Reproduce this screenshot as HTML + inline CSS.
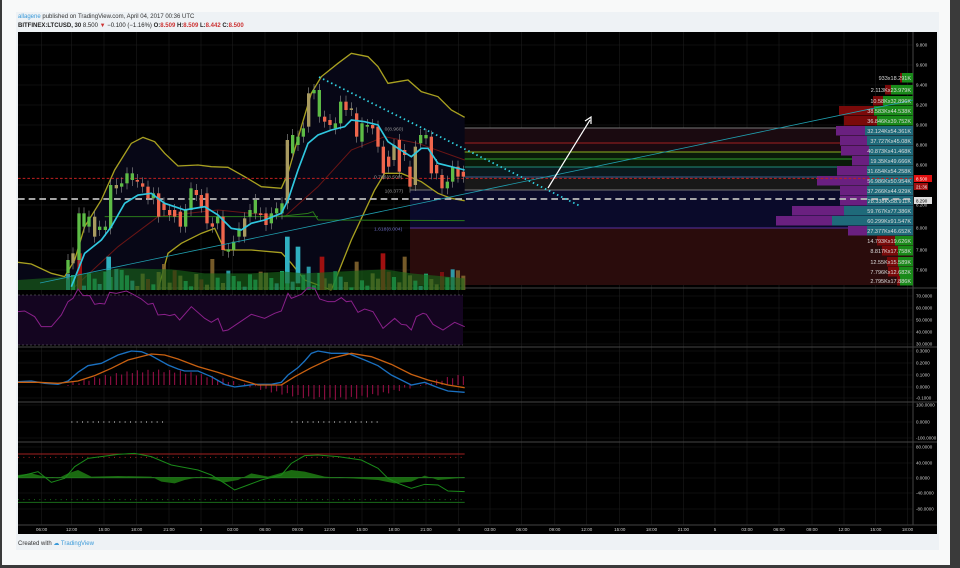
<!DOCTYPE html>
<html><head><meta charset="utf-8"><style>
*{margin:0;padding:0;box-sizing:border-box}
body{width:960px;height:568px;background:#3a3a3a;font-family:"Liberation Sans",sans-serif;position:relative;overflow:hidden}
#card{position:absolute;left:2px;top:0;width:948px;height:565px;background:#f8f9f9}
#inner{position:absolute;left:16px;top:12px;width:923px;height:538px;background:#eef2f5}
.h1{position:absolute;left:18px;top:14px;font-size:6px;color:#333}
.h2{position:absolute;left:18px;top:23px;font-size:6px;color:#222;font-weight:bold}
.r{color:#c33}
#foot{position:absolute;left:18px;top:540px;font-size:6px;color:#333}
svg{position:absolute;left:0;top:0}
</style></head><body>
<div id="card"></div><div id="inner"></div>
<div class="h1"><span style="color:#3a9ad9">allagene</span> published on TradingView.com, April 04, 2017 00:36 UTC</div>
<div class="h2">BITFINEX:LTCUSD, 30 <span style="font-weight:normal">8.500 <span class="r">▼</span> −0.100 (−1.16%)</span> O:<span class="r">8.509</span> H:<span class="r">8.509</span> L:<span class="r">8.442</span> C:<span class="r">8.500</span></div>
<div id="foot">Created with <span style="color:#3a9ad9">☁ TradingView</span></div>
<svg width="960" height="568" id="s" font-family="Liberation Sans" font-size="5">
<rect x="18" y="32" width="919" height="502" fill="#000"/>
<g id="grid" stroke="#1c1c1c" stroke-width="0.6"></g>
<g stroke="#444" stroke-width="1">
<line x1="18" y1="288" x2="937" y2="288"/><line x1="18" y1="347" x2="937" y2="347"/>
<line x1="18" y1="402" x2="937" y2="402"/><line x1="18" y1="442" x2="937" y2="442"/>
<line x1="18" y1="525" x2="937" y2="525"/><line x1="913" y1="32" x2="913" y2="525"/>
</g>
<rect x="410" y="128" width="503" height="100" fill="#1a0a10"/>
<rect x="410" y="152" width="503" height="15" fill="#0a1a0a"/>
<rect x="410" y="167" width="503" height="10" fill="#0a1a1f"/>
<rect x="410" y="177" width="503" height="13" fill="#181818"/>
<rect x="410" y="190" width="503" height="38" fill="#0a0a2a"/>
<rect x="410" y="228" width="503" height="57" fill="#2a0c0c"/>
<g stroke-width="1">
<line x1="410" y1="128" x2="913" y2="128" stroke="#777"/>
<line x1="410" y1="143" x2="913" y2="143" stroke="#a02020"/>
<line x1="410" y1="152" x2="913" y2="152" stroke="#8ab020"/>
<line x1="410" y1="159" x2="913" y2="159" stroke="#30a030"/>
<line x1="410" y1="167" x2="913" y2="167" stroke="#208a7a"/>
<line x1="410" y1="177" x2="913" y2="177" stroke="#3a5a8a"/>
<line x1="410" y1="190" x2="913" y2="190" stroke="#777"/>
<line x1="410" y1="228" x2="913" y2="228" stroke="#5a30a0"/>
</g>
<g id="vp"></g>
<g transform="translate(18,60) scale(0.33333)">
<path d="M0,607 L40,612 100,640 140,650 170,600 200,500 250,420 290,330 340,250 375,232 410,245 440,280 480,318 540,315 580,320 630,322 680,350 730,380 790,385 810,340 850,200 880,100 910,50 960,10 1000,-20 1050,-10 1080,20 1110,70 1170,60 1210,95 1260,110 1300,150 1340,172 L1340,422 1300,415 1260,400 1210,365 1150,340 1100,340 1070,390 1000,540 940,690 860,660 820,610 790,578 700,570 620,570 590,505 550,520 490,550 450,580 420,690 0,690Z" fill="#070716"/>
<path d="M0,607 L40,612 100,640 140,650 170,600 200,500 250,420 290,330 340,250 375,232 410,245 440,280 480,318 540,315 580,320 630,322 680,350 730,380 790,385 810,340 850,200 880,100 910,50 960,10 1000,-20 1050,-10 1080,20 1110,70 1170,60 1210,95 1260,110 1300,150 1340,172" fill="none" stroke="#a8a020" stroke-width="4"/>
<path d="M420,690 L450,580 490,550 550,520 590,505 620,570 700,570 790,578 820,610 860,660 940,690 M940,690 L1000,540 1070,390 1100,340 1150,340 1210,365 1260,400 1300,415 1340,422" fill="none" stroke="#a8a020" stroke-width="4"/>
<path d="M160,690 L300,560 420,470 600,450 800,470 900,380 1000,270 1100,230 1200,250 1340,300" fill="none" stroke="#6a1515" stroke-width="3"/>
<path d="M260,470 L900,470 M900,480 L1340,482" stroke="#2a7a1a" stroke-width="3"/>
<path d="M780,470 L870,460 885,455 900,480" fill="none" stroke="#2a7a1a" stroke-width="3"/>
<line x1="0" y1="355" x2="2685" y2="355" stroke="#c02020" stroke-width="3" stroke-dasharray="8,6"/>
<line x1="0" y1="417" x2="2685" y2="417" stroke="#bbb" stroke-width="5" stroke-dasharray="20,12"/>
<g id="vol"></g>
<path d="M0,660 L150,650 300,625 460,628 560,640 700,640 800,635 860,640 960,635 1100,628 1180,640 1340,655 L1340,690 0,690Z" fill="#1a6a1a" opacity="0.6"/>
<g id="cnd"></g>
<path d="M160,680 L200,580 250,540 280,500 320,430 360,405 400,400 440,430 500,450 560,440 600,465 640,505 670,510 700,490 740,480 790,460 810,420 840,330 870,250 900,225 940,210 980,200 1000,180 1040,185 1080,195 1110,245 1140,265 1180,290 1210,265 1230,265 1260,310 1300,320 1340,330" fill="none" stroke="#30c8e0" stroke-width="5"/>
<text x="1100" y="212" fill="#999" font-size="15">0(8.960)</text>
<text x="1068" y="355" fill="#999" font-size="15">0.786(8.500)</text>
<text x="1100" y="398" fill="#999" font-size="15">1(8.377)</text>
<text x="1068" y="512" fill="#6a6ac0" font-size="15">1.618(8.004)</text>
</g>
<line x1="319" y1="77" x2="580" y2="206" stroke="#30d0e0" stroke-width="1.8" stroke-dasharray="1.5,3"/>
<line x1="40" y1="283" x2="913" y2="100" stroke="#20a0b0" stroke-width="0.8"/>
<line x1="548" y1="188" x2="590" y2="120" stroke="#fff" stroke-width="1.2"/>
<path d="M585,121 L591,117 591,124" fill="none" stroke="#fff" stroke-width="1.2"/>
<rect x="18" y="295" width="445" height="50" fill="#140520"/>
<line x1="18" y1="295" x2="463" y2="295" stroke="#777" stroke-dasharray="2,2" stroke-width="0.6"/>
<line x1="18" y1="345" x2="463" y2="345" stroke="#777" stroke-dasharray="2,2" stroke-width="0.6"/>
<g transform="translate(18,285) scale(0.33333)">
<path d="M0,80 L20,78 50,95 70,125 100,125 130,90 150,50 165,40 180,12 195,32 215,32 230,58 245,55 260,57 275,22 295,25 325,18 345,28 370,42 390,58 405,55 420,90 440,88 455,92 470,88 485,105 520,65 560,100 580,112 600,100 615,138 630,135 660,115 700,88 740,100 770,85 790,78 810,25 820,40 850,28 870,8 890,10 905,42 930,50 950,50 970,38 985,50 1000,48 1020,82 1040,72 1065,80 1095,130 1130,100 1150,118 1165,120 1180,135 1195,95 1215,85 1225,88 1245,118 1275,135 1310,112 1340,125" fill="none" stroke="#8a208a" stroke-width="3"/>
<g id="hist"></g>
<path d="M0,290 L40,288 80,295 120,298 150,288 180,262 210,242 250,235 270,225 300,210 340,198 370,200 400,212 450,240 480,252 500,258 540,258 580,275 620,298 650,306 680,302 710,298 760,298 790,292 810,270 840,248 860,228 880,205 900,198 940,205 990,205 1040,225 1080,242 1120,270 1150,285 1180,300 1220,292 1260,308 1290,318 1340,322" fill="none" stroke="#1a70c0" stroke-width="4"/>
<path d="M0,292 L60,292 120,295 180,288 230,272 280,250 330,225 400,207 440,210 480,222 540,245 600,262 660,282 720,300 790,300 830,275 880,248 940,220 1000,205 1060,215 1120,238 1180,268 1230,285 1290,300 1340,308" fill="none" stroke="#c86010" stroke-width="4"/>
<line x1="160" y1="411" x2="440" y2="411" stroke="#888" stroke-width="5" stroke-dasharray="3,13"/>
<line x1="820" y1="411" x2="1085" y2="411" stroke="#888" stroke-width="5" stroke-dasharray="3,13"/>
<line x1="0" y1="507" x2="1340" y2="507" stroke="#a02020" stroke-width="3"/>
<line x1="0" y1="517" x2="1340" y2="517" stroke="#a02020" stroke-width="3" stroke-dasharray="3,13"/>
<line x1="0" y1="578" x2="1340" y2="578" stroke="#2a8a2a" stroke-width="3"/>
<line x1="0" y1="652" x2="1340" y2="652" stroke="#1a6a1a" stroke-width="3"/>
<line x1="0" y1="644" x2="1340" y2="644" stroke="#1a6a1a" stroke-width="3" stroke-dasharray="3,13"/>
<path d="M0,570 L40,565 80,575 120,580 150,565 180,555 220,575 300,573 400,575 430,590 470,595 500,585 550,575 620,592 660,585 700,565 750,575 820,555 860,560 920,575 1000,580 1080,585 1130,595 1180,590 1220,572 1260,585 1340,578 L1340,578 0,578Z" fill="#1a6a10"/>
<path d="M0,575 L60,560 100,592 140,580 170,545 210,520 300,508 350,505 400,515 460,540 540,555 580,570 620,595 650,615 690,600 730,585 790,570 820,535 860,512 900,510 960,515 1030,525 1080,550 1110,580 1140,595 1180,610 1220,598 1260,600 1290,618 1340,620" fill="none" stroke="#1a8a1a" stroke-width="3"/>
</g>
<g id="vpt" fill="#ddd" font-size="5.5" text-anchor="end"></g>
<g fill="#ccc" font-size="4.5" id="ax"></g>
<rect x="914" y="175" width="18" height="7" fill="#e01010"/><text x="916" y="180.5" fill="#fff" font-size="4.5">8.500</text>
<rect x="914" y="183" width="14" height="7" fill="#a01010"/><text x="916" y="188.5" fill="#fff" font-size="4.5">21:36</text>
<rect x="914" y="197" width="18" height="7" fill="#ddd"/><text x="916" y="202.5" fill="#000" font-size="4.5">8.290</text>
</svg>
<script>
var NS="http://www.w3.org/2000/svg";
function el(p,t,a,txt){var e=document.createElementNS(NS,t);for(var k in a)e.setAttribute(k,a[k]);if(txt)e.textContent=txt;document.getElementById(p).appendChild(e);return e;}
var xs=[41.6,71.6,104,136.6,169,201,232.7,265,297.6,329.5,362,394,426,458.7,490,521.7,554.8,586.6,619.7,651.5,683.4,715,747,779,812,844,875.7,907.5];
var tl=["06:00","12:00","15:00","18:00","21:00","3","03:00","06:00","09:00","12:00","15:00","18:00","21:00","4","03:00","06:00","09:00","12:00","15:00","18:00","21:00","5","03:00","06:00","09:00","12:00","15:00","18:00"];
xs.forEach(function(x,i){el("grid","line",{x1:x,y1:32,x2:x,y2:525});el("ax","text",{x:x,y:531,"text-anchor":"middle"},tl[i]);});
var py=[["9.800",45],["9.600",65],["9.400",85],["9.200",105],["9.000",125],["8.800",145],["8.600",165],["8.400",185],["8.200",205],["8.000",228],["7.800",250],["7.600",270],
["70.0000",296],["60.0000",308],["50.0000",320],["40.0000",332],["30.0000",344],
["0.3000",351],["0.2000",363],["0.1000",375],["0.0000",387],["-0.1000",398],
["100.0000",405],["0.0000",422],["-100.0000",438],
["80.0000",447],["40.0000",463],["0.0000",478],["-40.0000",493],["-80.0000",509]];
py.forEach(function(p){el("grid","line",{x1:18,y1:p[1],x2:913,y2:p[1]});el("ax","text",{x:916,y:p[1]+1.5},p[0]);});
var c=[[150,600,640],[165,580,610],[183,460,600],[198,460,500],[213,470,500],[230,470,530],[245,500,510],[262,500,510],[278,375,505],[295,375,385],[311,370,380],[327,340,370],[343,340,360],[358,360,365,1],[374,370,380,1],[390,380,415,1],[406,400,415],[422,400,470,1],[438,430,450,1],[455,450,465,1],[470,450,470,1],[487,455,500,1],[503,450,500],[519,385,450],[535,390,405,1],[550,405,440,1],[567,400,490,1],[583,490,500,1],[599,470,490],[615,470,570,1],[631,568,575],[647,545,570],[663,505,530],[680,475,530],[696,450,470],[712,420,460],[728,460,465,1],[744,460,495,1],[760,460,490],[776,445,460],[792,430,460],[808,240,430],[824,225,280],[840,230,255],[856,205,230],[872,100,200],[888,90,100],[904,90,170],[920,170,185,1],[936,180,195,1],[952,190,205],[968,125,190],[984,125,150,1],[1000,145,150],[1016,160,230,1],[1032,190,245],[1048,195,200],[1064,195,205,1],[1080,200,260,1],[1096,260,340,1],[1112,290,320,1],[1128,255,300],[1144,240,335,1],[1160,270,285,1],[1176,320,380,1],[1192,260,375],[1208,225,250],[1224,225,235],[1240,230,340,1],[1256,315,340,1],[1272,345,385,1],[1288,365,385],[1304,320,365],[1320,320,350,1],[1336,335,350,1]];
c.forEach(function(d,i){var col=d[3]?"#f0664c":(i%4==1?"#a89a60":"#5dbb46");var x=d[0];
el("cnd","line",{x1:x,y1:d[1]-18,x2:x,y2:d[2]+18,stroke:"#888","stroke-width":2});
el("cnd","rect",{x:x-5,y:d[1],width:10,height:Math.max(4,d[2]-d[1]),fill:col});
var h=(i*37%53)+8;if(i%9==0)h+=40;var vc=d[3]?(i%5==0?"#8a1010":"#8a6a30"):(i%3==0?"#30b0c0":"#20c080");
el("vol","rect",{x:x-6,y:690-h,width:12,height:h,fill:vc,opacity:0.85});
var hv=Math.round(60*Math.sin(i/10.5)+(i%2?6:-4));var hy=300;
el("hist","line",{x1:x,y1:hy,x2:x,y2:hy-hv*0.7,stroke:"#a0104a","stroke-width":3});});
[[808,530,140,"#30b0c0"],[840,560,110,"#30b0c0"],[272,590,100,"#30b0c0"],[185,580,110,"#a01010"],[912,590,100,"#a01010"],[1095,580,110,"#a01010"]].forEach(function(b){el("vol","rect",{x:b[0]-7,y:b[1],width:14,height:b[2],fill:b[3]});});
var vp=[[78,"933x18.291K",900,902,"g"],[90,"2.113Kx23.979K",885,891,"g"],[101,"10.58Kx32.896K",873,883,"g"],[111,"38.583Kx44.538K",839,874,"g"],[121,"36.846Kx39.752K",844,877,"g"],[131,"32.124Kx54.361K",836,865,"p"],[141,"37.727Kx45.08K",840,867,"p"],[151,"40.873Kx41.468K",841,869,"p"],[161,"19.35Kx49.666K",852,869,"p"],[171,"31.654Kx54.258K",837,867,"p"],[181,"56.986Kx50.954K",817,869,"p"],[191,"37.266Kx44.929K",840,867,"p"],[201,"28.338Kx58.911K",840,867,"p"],[211,"59.767Kx77.386K",792,844,"p"],[221,"60.299Kx91.547K",776,832,"p"],[231,"27.377Kx46.652K",848,867,"p"],[241,"14.793Kx19.626K",877,895,"g"],[251,"8.817Kx17.758K",882,898,"g"],[262,"12.55Kx15.589K",887,898,"g"],[272,"7.796Kx12.682K",888,899,"g"],[281,"2.795Kx17.886K",897,900,"g"]];
vp.forEach(function(r){var y=r[0]-5;var g=r[4]=="g";
el("vp","rect",{x:r[2],y:y,width:913-r[2],height:9.5,fill:g?"#7a0a0a":"#6a2080"});
el("vp","rect",{x:r[3],y:y,width:913-r[3],height:9.5,fill:g?"#1a8a1a":"#1f6a7a"});
el("vpt","text",{x:911,y:r[0]+2},r[1]);});
</script>
</body></html>
